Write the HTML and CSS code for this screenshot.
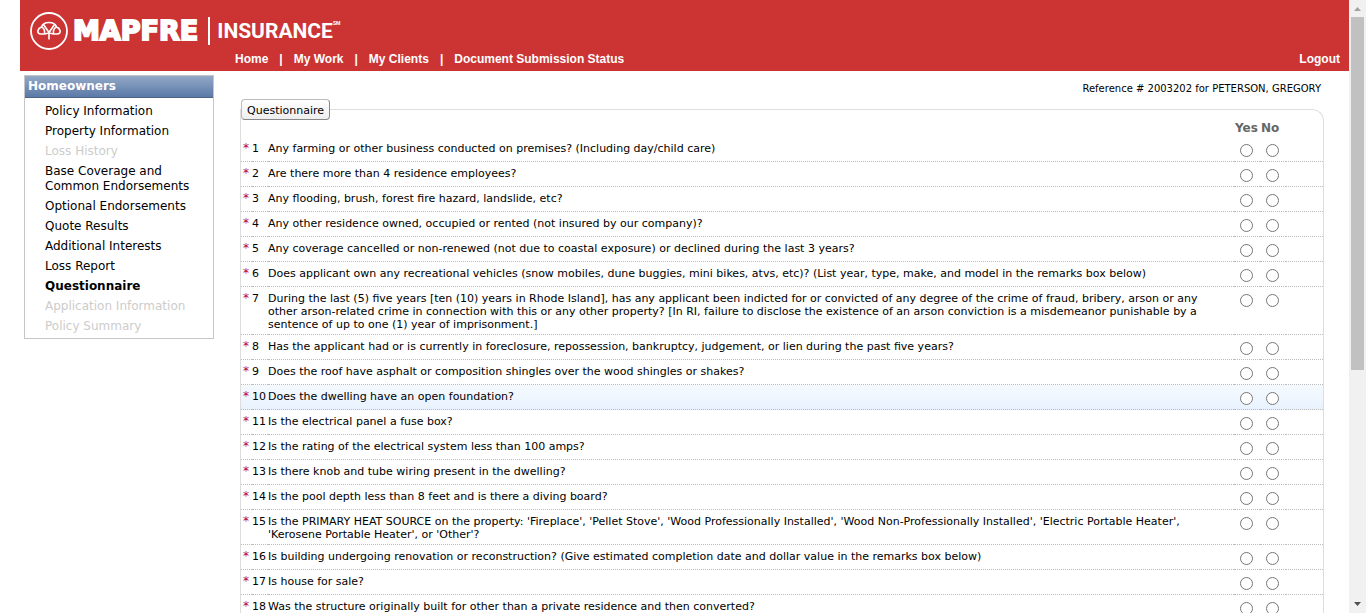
FILE: index.html
```html
<!DOCTYPE html>
<html lang="en">
<head>
<meta charset="utf-8">
<title>Homeowners - Questionnaire</title>
<link rel="stylesheet" href="styles.css">
</head>
<body>
<div class="page">
  <header class="banner">
    <div class="logo">
      <svg class="logo-mark" viewBox="0 0 38 38" width="38" height="38" fill="none" stroke="#fff" aria-hidden="true">
        <circle cx="19" cy="19" r="18" stroke-width="1.800"/>
        <path d="M11 22H14.500L19 21L23.500 22H27C29.500 22 30.500 20.500 30 18.500C29.500 16.500 28 15.500 26.500 15C25.500 12 22.500 10.500 19 10.500S12.500 12 11.500 15C10 15.500 8.500 16.500 8 18.500C7.500 20.500 8.500 22 11 22Z" stroke-width="1.700"/>
        <path d="M19 27.500V21M11.500 15C14 16 15 18.500 14.500 22M26.500 15C24 16 23 18.500 23.500 22M13.500 12.500L19 20.500L24.500 12.500" stroke-width="1.600"/>
      </svg>
      <span class="logo-name">MAPFRE</span>
      <span class="logo-line"></span>
      <span class="logo-sub">INSURANCE</span><span class="logo-sm">SM</span>
    </div>
    <nav class="topnav">
      <a href="#">Home</a><span>|</span><a href="#">My Work</a><span>|</span><a href="#">My Clients</a><span>|</span><a href="#">Document Submission Status</a>
      <a class="logout" href="#">Logout</a>
    </nav>
  </header>
  <div class="columns">
    <nav class="side">
      <h2 class="side-title">Homeowners</h2>
      <ul class="side-list">
        <li><a href="#">Policy Information</a></li>
        <li><a href="#">Property Information</a></li>
        <li class="off">Loss History</li>
        <li><a href="#">Base Coverage and Common Endorsements</a></li>
        <li><a href="#">Optional Endorsements</a></li>
        <li><a href="#">Quote Results</a></li>
        <li><a href="#">Additional Interests</a></li>
        <li><a href="#">Loss Report</a></li>
        <li><a class="current" href="#">Questionnaire</a></li>
        <li class="off">Application Information</li>
        <li class="off">Policy Summary</li>
      </ul>
    </nav>
    <main class="content">
      <p class="reference">Reference # 2003202 for PETERSON, GREGORY</p>
      <section class="panel">
        <button class="tab" type="button">Questionnaire</button>
        <table class="questions">
          <thead>
            <tr><th class="req"></th><th class="num"></th><th></th><th class="pick">Yes</th><th class="pick">No</th><th class="end"></th></tr>
          </thead>
          <tbody>
            <tr><td class="req">*</td><td class="num">1</td><td class="text" id="q1">Any farming or other business conducted on premises? (Including day/child care)</td><td class="pick"><input type="radio" name="q1" aria-labelledby="q1"></td><td class="pick"><input type="radio" name="q1" aria-labelledby="q1"></td><td></td></tr>
            <tr><td class="req">*</td><td class="num">2</td><td class="text" id="q2">Are there more than 4 residence employees?</td><td class="pick"><input type="radio" name="q2" aria-labelledby="q2"></td><td class="pick"><input type="radio" name="q2" aria-labelledby="q2"></td><td></td></tr>
            <tr><td class="req">*</td><td class="num">3</td><td class="text" id="q3">Any flooding, brush, forest fire hazard, landslide, etc?</td><td class="pick"><input type="radio" name="q3" aria-labelledby="q3"></td><td class="pick"><input type="radio" name="q3" aria-labelledby="q3"></td><td></td></tr>
            <tr><td class="req">*</td><td class="num">4</td><td class="text" id="q4">Any other residence owned, occupied or rented (not insured by our company)?</td><td class="pick"><input type="radio" name="q4" aria-labelledby="q4"></td><td class="pick"><input type="radio" name="q4" aria-labelledby="q4"></td><td></td></tr>
            <tr><td class="req">*</td><td class="num">5</td><td class="text" id="q5">Any coverage cancelled or non-renewed (not due to coastal exposure) or declined during the last 3 years?</td><td class="pick"><input type="radio" name="q5" aria-labelledby="q5"></td><td class="pick"><input type="radio" name="q5" aria-labelledby="q5"></td><td></td></tr>
            <tr><td class="req">*</td><td class="num">6</td><td class="text" id="q6">Does applicant own any recreational vehicles (snow mobiles, dune buggies, mini bikes, atvs, etc)? (List year, type, make, and model in the remarks box below)</td><td class="pick"><input type="radio" name="q6" aria-labelledby="q6"></td><td class="pick"><input type="radio" name="q6" aria-labelledby="q6"></td><td></td></tr>
            <tr><td class="req">*</td><td class="num">7</td><td class="text" id="q7">During the last (5) five years [ten (10) years in Rhode Island], has any applicant been indicted for or convicted of any degree of the crime of fraud, bribery, arson or any other arson-related crime in connection with this or any other property? [In RI, failure to disclose the existence of an arson conviction is a misdemeanor punishable by a sentence of up to one (1) year of imprisonment.]</td><td class="pick"><input type="radio" name="q7" aria-labelledby="q7"></td><td class="pick"><input type="radio" name="q7" aria-labelledby="q7"></td><td></td></tr>
            <tr><td class="req">*</td><td class="num">8</td><td class="text" id="q8">Has the applicant had or is currently in foreclosure, repossession, bankruptcy, judgement, or lien during the past five years?</td><td class="pick"><input type="radio" name="q8" aria-labelledby="q8"></td><td class="pick"><input type="radio" name="q8" aria-labelledby="q8"></td><td></td></tr>
            <tr><td class="req">*</td><td class="num">9</td><td class="text" id="q9">Does the roof have asphalt or composition shingles over the wood shingles or shakes?</td><td class="pick"><input type="radio" name="q9" aria-labelledby="q9"></td><td class="pick"><input type="radio" name="q9" aria-labelledby="q9"></td><td></td></tr>
            <tr class="hover"><td class="req">*</td><td class="num">10</td><td class="text" id="q10">Does the dwelling have an open foundation?</td><td class="pick"><input type="radio" name="q10" aria-labelledby="q10"></td><td class="pick"><input type="radio" name="q10" aria-labelledby="q10"></td><td></td></tr>
            <tr><td class="req">*</td><td class="num">11</td><td class="text" id="q11">Is the electrical panel a fuse box?</td><td class="pick"><input type="radio" name="q11" aria-labelledby="q11"></td><td class="pick"><input type="radio" name="q11" aria-labelledby="q11"></td><td></td></tr>
            <tr><td class="req">*</td><td class="num">12</td><td class="text" id="q12">Is the rating of the electrical system less than 100 amps?</td><td class="pick"><input type="radio" name="q12" aria-labelledby="q12"></td><td class="pick"><input type="radio" name="q12" aria-labelledby="q12"></td><td></td></tr>
            <tr><td class="req">*</td><td class="num">13</td><td class="text" id="q13">Is there knob and tube wiring present in the dwelling?</td><td class="pick"><input type="radio" name="q13" aria-labelledby="q13"></td><td class="pick"><input type="radio" name="q13" aria-labelledby="q13"></td><td></td></tr>
            <tr><td class="req">*</td><td class="num">14</td><td class="text" id="q14">Is the pool depth less than 8 feet and is there a diving board?</td><td class="pick"><input type="radio" name="q14" aria-labelledby="q14"></td><td class="pick"><input type="radio" name="q14" aria-labelledby="q14"></td><td></td></tr>
            <tr><td class="req">*</td><td class="num">15</td><td class="text" id="q15">Is the PRIMARY HEAT SOURCE on the property: 'Fireplace', 'Pellet Stove', 'Wood Professionally Installed', 'Wood Non-Professionally Installed', 'Electric Portable Heater', 'Kerosene Portable Heater', or 'Other'?</td><td class="pick"><input type="radio" name="q15" aria-labelledby="q15"></td><td class="pick"><input type="radio" name="q15" aria-labelledby="q15"></td><td></td></tr>
            <tr><td class="req">*</td><td class="num">16</td><td class="text" id="q16">Is building undergoing renovation or reconstruction? (Give estimated completion date and dollar value in the remarks box below)</td><td class="pick"><input type="radio" name="q16" aria-labelledby="q16"></td><td class="pick"><input type="radio" name="q16" aria-labelledby="q16"></td><td></td></tr>
            <tr><td class="req">*</td><td class="num">17</td><td class="text" id="q17">Is house for sale?</td><td class="pick"><input type="radio" name="q17" aria-labelledby="q17"></td><td class="pick"><input type="radio" name="q17" aria-labelledby="q17"></td><td></td></tr>
            <tr><td class="req">*</td><td class="num">18</td><td class="text" id="q18">Was the structure originally built for other than a private residence and then converted?</td><td class="pick"><input type="radio" name="q18" aria-labelledby="q18"></td><td class="pick"><input type="radio" name="q18" aria-labelledby="q18"></td><td></td></tr>
          </tbody>
        </table>
      </section>
    </main>
  </div>
</div>
<div class="scrollbar" aria-hidden="true">
  <svg width="17" height="17" viewBox="0 0 17 17"><path d="M5 11L8.500 7L12 11Z" fill="#a3a3a3"/></svg>
  <div class="track"><div class="thumb"></div></div>
  <svg width="17" height="17" viewBox="0 0 17 17"><path d="M5 6L8.500 10L12 6Z" fill="#505050"/></svg>
</div>
</body>
</html>
```
FILE: styles.css
```css
* { box-sizing: border-box; }

body {
  display: flex;
  height: 100vh;
  margin: 0;
  overflow: hidden;
  background: #fff;
  color: #000;
  font: 11px/13px Verdana, "DejaVu Sans", sans-serif;
}

a { color: inherit; text-decoration: none; }

.page {
  flex: 1;
  min-width: 0;
  padding-left: 20px;
  overflow: hidden;
}

.banner {
  padding: 12px 9px 3px 10px;
  background: #cc3333;
  color: #fff;
}

.logo {
  display: flex;
  align-items: center;
  height: 38px;
}

.logo-mark { margin-right: 5px; }

.logo-name {
  font: 700 27px/38px "DejaVu Sans", sans-serif;
  -webkit-text-stroke: 2px #fff;
}

.logo-line {
  width: 2px;
  height: 28px;
  margin: 0 7px 0 10px;
  background: #fff;
}

.logo-sub { font: 700 21px/38px Roboto, sans-serif; }

.logo-sm {
  align-self: flex-start;
  padding-top: 8px;
  font: 700 5px/6px Roboto, sans-serif;
}

.topnav {
  display: flex;
  gap: 11px;
  padding-left: 205px;
  font: 700 12px/18px "Liberation Sans", Arial, sans-serif;
}

.logout { margin-left: auto; }

.columns {
  display: flex;
  gap: 26px;
  padding: 4px 25px 0 4px;
}

.side {
  flex: none;
  align-self: flex-start;
  width: 190px;
  border: 1px solid #c6c6c6;
}

.side-title {
  margin: 0;
  padding: 0 3px;
  border-bottom: 1px solid #4f6485;
  background: linear-gradient(#93a8c7, #5b7aa8);
  color: #fff;
  font-size: 12px;
  line-height: 21px;
}

.side-list {
  margin: 0;
  padding: 6px 16px 4px 20px;
  list-style: none;
  font-size: 12px;
  line-height: 15px;
}

.side-list li + li { padding-top: 5px; }
.side-list .off { color: #ccc; }
.side-list .current { font-weight: 700; }

.content {
  flex: 1;
  min-width: 0;
}

.reference {
  margin: 0;
  padding: 7px 3px 14px 0;
  font-size: 10px;
  text-align: right;
}

.panel {
  border: 1px solid #ddd;
  border-bottom: 0;
  border-radius: 0 12px 0 0;
}

.tab {
  display: block;
  height: 21px;
  margin: -11px 0 0;
  padding: 1px 5px 0;
  border: 1px solid #999;
  border-color: #bbb #888 #888 #bbb;
  border-radius: 4px;
  background: linear-gradient(#fff, #eee);
  color: #000;
  font: inherit;
}

.questions {
  width: 100%;
  border-spacing: 0;
  table-layout: fixed;
}

.questions th {
  height: 17px;
  padding: 0 0 0 1px;
  color: #666;
  font-size: 12px;
  line-height: 17px;
}

.questions td {
  height: 25px;
  padding: 5px 0 3px;
  border-bottom: 1px dotted #bbb;
  vertical-align: top;
}

.questions .req { width: 11px; padding-left: 2px; color: #b8002a; }
.questions td.req { font-size: 12px; }
.questions .num { width: 16px; }
.questions .text { padding-right: 8px; }
.questions .pick { width: 26px; text-align: left; }
.questions .end { width: 37px; }
.questions td.pick { padding: 7px 0 0 6px; }

.pick input {
  display: block;
  width: 13px;
  height: 13px;
  margin: 0;
}

.hover { background: linear-gradient(#f5faff, #e8f2fe); }

.scrollbar {
  display: flex;
  flex: none;
  flex-direction: column;
  width: 17px;
  background: #f1f1f1;
}

.scrollbar svg { display: block; }
.track { flex: 1; padding: 0 2px; }
.thumb { height: 61%; background: #c1c1c1; }
```
